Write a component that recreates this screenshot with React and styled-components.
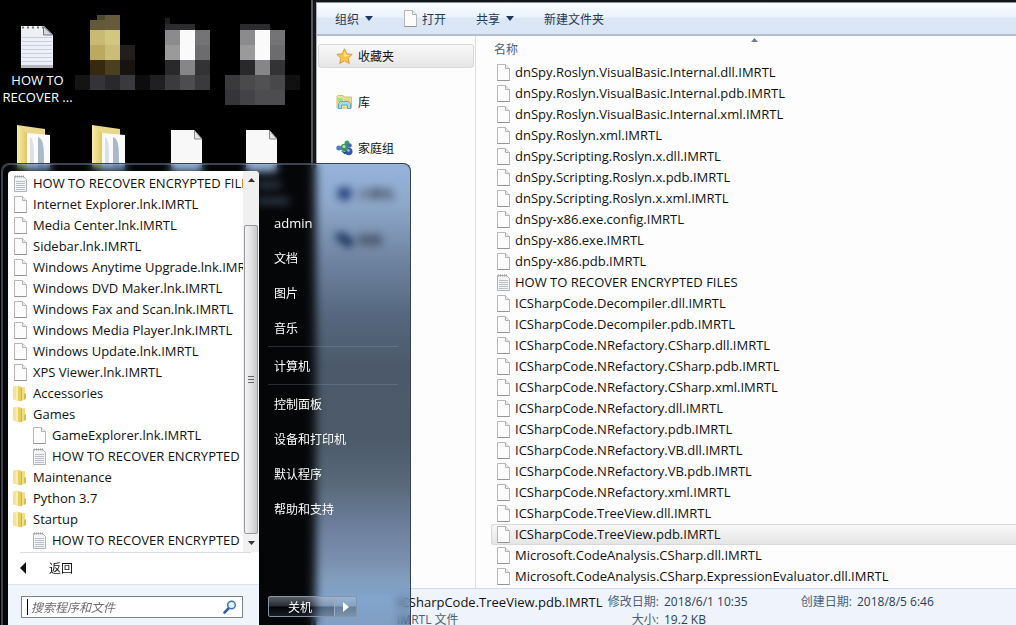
import React from 'react';
import styled, { createGlobalStyle, css } from 'styled-components';

const GlobalStyle = createGlobalStyle`
  * { box-sizing: border-box; }
  html, body { margin: 0; height: 100%; background: #000; }
  #root { height: 100%; }
  body, button, input {
    font-family: "Open Sans", "Noto Sans CJK SC", sans-serif;
    font-size: 12px;
  }
  button { margin: 0; padding: 0; border: 0; background: none; color: inherit; text-align: left; }
  ul { margin: 0; padding: 0; list-style: none; }
`;

/* ---------- desktop ---------- */

const Desktop = styled.div`
  position: relative;
  display: grid;
  grid-template-columns: 311px minmax(0, 1fr);
  height: 100%;
  min-height: 100vh;
  overflow: hidden;
  background: #000;
`;

const IconGrid = styled.div`
  display: grid;
  grid-template-columns: repeat(4, 75px);
  grid-template-rows: 110px 100px;
  align-content: start;
`;

const DesktopIcon = styled.button`
  display: flex;
  flex-direction: column;
  align-items: center;
  color: #fff;
  line-height: 17px;
  text-align: center;
  white-space: pre-line;
  svg { display: block; flex: none; }
`;

const IconLabel = styled.span`
  margin-top: 2px;
  font-size: 13px;
`;

/* ---------- explorer window ---------- */

const Explorer = styled.section`
  display: flex;
  flex-direction: column;
  min-height: 0;
  padding-left: 3px;
  padding-top: 2px;
  background: #14171a;
  border-left: 2px solid #55595d;
`;

const Frame = styled.div`
  flex: 1;
  display: flex;
  flex-direction: column;
  min-height: 0;
  background: #fdfdfe;
  border-top: 1px solid #8d9499;
  border-left: 1px solid #a9adb1;
`;

const Toolbar = styled.div`
  flex: none;
  display: flex;
  align-items: center;
  height: 33px;
  padding-left: 18px;
  gap: 30px;
  background: linear-gradient(#fafdff, #eaf2fc 45%, #dce7f5 50%, #dae6f5);
  border-bottom: 2px solid #b0bfd2;
  color: #1e395b;
`;

const ToolButton = styled.button`
  display: flex;
  align-items: center;
  gap: ${(p) => (p.$tight ? 4 : 6)}px;
`;

const Body = styled.div`
  flex: 1;
  display: flex;
  min-height: 0;
`;

const Nav = styled.nav`
  flex: none;
  width: 159px;
  padding: 8px 1px 0;
  display: flex;
  flex-direction: column;
  gap: 22px;
  border-right: 1px solid #d6e0ee;
`;

const NavItem = styled.button`
  display: flex;
  align-items: center;
  gap: 5px;
  height: 24px;
  padding-left: 17px;
  color: #111;
  border: 1px solid transparent;
  border-radius: 3px;
  ${(p) => p.$active && css`
    background: linear-gradient(#f9f9f9, #e6e6e6);
    border-color: #d9d9d9;
  `}
`;

const ListPane = styled.div`
  position: relative;
  flex: 1;
  min-width: 0;
  padding-left: 15px;
  overflow: hidden;
`;

const SortMark = styled.svg`
  position: absolute;
  left: 51%;
  top: 2px;
`;

const FileTable = styled.table`
  width: 100%;
  border-collapse: collapse;
`;

const HeadCell = styled.th`
  height: 26px;
  padding: 0 0 0 3px;
  text-align: left;
  font-weight: 400;
  color: #4c607a;
`;

const FileCell = styled.td`
  height: 21px;
  padding: 0;
`;

const FileRow = styled.div`
  display: flex;
  align-items: center;
  gap: 4px;
  height: 21px;
  padding-left: 4px;
  border: 1px solid transparent;
  border-right: 0;
  border-radius: 3px 0 0 3px;
  font-size: 13px;
  line-height: 19px;
  color: #111;
  white-space: nowrap;
  ${(p) => p.$selected && css`
    background: linear-gradient(#f8f8f8, #e5e5e5);
    border-color: #d9d9d9;
  `}
`;

const Details = styled.footer`
  flex: none;
  display: grid;
  grid-template-columns: 206px 56px 137px 56px 1fr;
  grid-template-rows: 18px 18px;
  height: 37px;
  padding: 4px 0 0 80px;
  overflow: hidden;
  background: #eff4fc;
  border-top: 1px solid #cfdaea;
  color: #4c607a;
  line-height: 18px;
  white-space: nowrap;
`;

const DetailName = styled.span`
  font-size: 13px;
  color: #111;
`;

const DetailLabel = styled.span`
  text-align: right;
`;

const DetailValue = styled.span`
  padding-left: 5px;
  color: #2c3e58;
`;

/* ---------- start menu ---------- */

const StartMenu = styled.aside`
  position: absolute;
  left: 1px;
  bottom: 0;
  width: 410px;
  height: 462px;
  border-radius: 8px 8px 0 0;
`;

const GlassBlur = styled.div`
  position: absolute;
  inset: 0;
  border-radius: inherit;
  backdrop-filter: blur(4px);
`;

const GlassTint = styled.div`
  position: absolute;
  inset: 0;
  border-radius: inherit;
  mix-blend-mode: multiply;
  background: linear-gradient(#9ab9df, #92acce 9%, #7489a6 20%, #56687e 33%, #4a5968 44%, #4b5a67 60%, #5b6b7a 70%, #6d7f9c 78%, #7f95b3 87%, #8db0d2 94%, #8ca9c8);
`;

const MenuContent = styled.div`
  position: relative;
  display: flex;
  height: 100%;
  padding: 7px 0 0 6px;
  background: rgba(90, 120, 160, 0.05);
  border: 1px solid #39434f;
  border-bottom: 0;
  border-radius: inherit;
  box-shadow: inset 1px 1px 0 rgba(160, 185, 215, 0.35);
`;

const Programs = styled.div`
  flex: none;
  display: flex;
  flex-direction: column;
  width: 251px;
  background: #fff;
  border-radius: 4px 4px 0 0;
  overflow: hidden;
`;

const Scroller = styled.div`
  flex: none;
  display: flex;
  height: 381px;
`;

const ProgramList = styled.ul`
  flex: 1;
  min-width: 0;
  padding-top: 2px;
  overflow: hidden;
`;

const ProgramRow = styled.button`
  display: flex;
  align-items: center;
  gap: 5px;
  width: 100%;
  height: 21px;
  padding-left: ${(p) => (p.$nested ? 24 : 5)}px;
  color: #111;
  font-size: 13px;
  line-height: 19px;
  white-space: nowrap;
  overflow: hidden;
  svg { flex: none; }
`;

const ScrollBar = styled.div`
  flex: none;
  display: flex;
  flex-direction: column;
  width: 16px;
  background: #f0f0f1;
`;

const ScrollArrow = styled.button`
  display: grid;
  place-items: center;
  height: 18px;
`;

const ScrollGap = styled.div`
  height: 36px;
`;

const Thumb = styled.div`
  flex: 1;
  display: grid;
  place-items: center;
  margin: 0 1px;
  background: linear-gradient(90deg, #f4f4f5, #e2e2e4 50%, #c6c7ca);
  border: 1px solid #98999c;
  border-radius: 2px;
`;

const BackRow = styled.button`
  flex: 1;
  display: flex;
  align-items: center;
  gap: 23px;
  margin: 0 8px 0 12px;
  padding-bottom: 1px;
  border-top: 1px solid #d8dde3;
  color: #111;
`;

const SearchArea = styled.div`
  flex: none;
  height: 41px;
  padding: 11px 16px 0 13px;
  background: #f0f4fb;
  border-top: 1px solid #dce3ee;
`;

const SearchBox = styled.label`
  display: flex;
  align-items: center;
  height: 22px;
  padding: 0 5px;
  background: #fff;
  border: 1px solid #7c838c;
`;

const Caret = styled.span`
  width: 1px;
  height: 16px;
  background: #000;
`;

const SearchInput = styled.input`
  flex: 1;
  min-width: 0;
  padding: 0 0 0 3px;
  border: 0;
  outline: 0;
  background: transparent;
  &::placeholder { color: #6d6d6d; opacity: 1; font-style: italic; }
`;

const Links = styled.div`
  flex: 1;
  display: flex;
  flex-direction: column;
  padding: 34px 12px 0 9px;
  color: #fff;
`;

const LinkItem = styled.button`
  height: 35px;
  padding-left: 6px;
  font-size: ${(p) => (p.$latin ? 13 : 12)}px;
`;

const LinkRule = styled.hr`
  width: 100%;
  height: 1px;
  margin: 1px 0;
  border: 0;
  background: rgba(160, 180, 200, 0.22);
`;

const Power = styled.div`
  display: flex;
  width: 89px;
  height: 21px;
  margin: auto 0 8px;
  border: 1px solid #8593a5;
  border-radius: 2px;
  background: linear-gradient(rgba(190, 200, 215, 0.45), rgba(120, 130, 145, 0.3) 48%, rgba(0, 0, 0, 0.35) 52%, rgba(60, 75, 95, 0.35));
`;

const ShutDown = styled.button`
  flex: 1;
  padding-right: 3px;
  text-align: center;
`;

const PowerMore = styled.button`
  display: grid;
  place-items: center;
  width: 22px;
  background: rgba(150, 180, 215, 0.3);
  border-left: 1px solid #9cabbd;
`;

/* ---------- drawings ---------- */

const PageIcon = () => (
  <svg width="15" height="17" viewBox="0 0 15 17">
    <path d="M1.500.5h8l4 4v12h-12z" fill="#fcfcfc" stroke="#b4b6b8" />
    <path d="M9.500.5v4h4" fill="#ececee" stroke="#b0b2b5" />
    <path d="M1.500 16.500h12" stroke="#929497" />
  </svg>
);

const NoteIcon = () => (
  <svg width="15" height="17" viewBox="0 0 15 17">
    <path d="M1.500 1.500h9l3 3v12h-12z" fill="#f1f3f5" stroke="#b0b4b7" />
    <path d="M3 6.500h9M3 8.500h9M3 10.500h9M3 12.500h9M3 14.500h9" stroke="#b8bfc5" />
    <path d="M2 1.500h9" stroke="#999" strokeDasharray="1 1" strokeWidth="2" />
  </svg>
);

const FolderIcon = () => (
  <svg width="15" height="17" viewBox="0 0 15 17">
    <path d="M0 1.500l5-1v15l-5-1z" fill="#f3e596" />
    <path d="M3 1l5 .5v15l-5-1.500z" fill="#e5cf62" />
    <path d="M3 1l2 .2v14.500l-2-.7z" fill="#f7edaf" />
    <path d="M8 2.500l4-.5v12.500l-4 1.500z" fill="#efdf86" />
    <path d="M8 2.500l1-.2v13.500l-1 .2z" fill="#cdb24a" />
    <path d="M11 9l2-1v6l-2 .8z" fill="#d6bd55" />
  </svg>
);

const StarIcon = () => (
  <svg width="17" height="17" viewBox="0 0 17 17">
    <path d="M8.500.8l2.300 5 5.400.6-4 3.700 1.100 5.400-4.800-2.700-4.800 2.700 1.100-5.400-4-3.700 5.400-.6z" fill="#fbc441" stroke="#d99a4a" />
    <path d="M8.500 3l1.500 3.700 3.500.4-5 2z" fill="#fff0a8" />
  </svg>
);

const LibraryIcon = () => (
  <svg width="17" height="16" viewBox="0 0 17 16">
    <path d="M1 2.500l1-1h5l1 1.500h7.500v11h-14.500z" fill="#efe39a" stroke="#d3bd6c" />
    <path d="M2 4h5v4H2z" fill="#a9d98c" />
    <path d="M8 4.500h6v3H8z" fill="#f0cf90" />
    <path d="M2.500 14.500v-5l2-2h8l2 2v5h-3v-3.500h-6v3.500z" fill="#a6dcea" stroke="#5fa9be" />
  </svg>
);

const HomegroupIcon = () => (
  <svg width="17" height="16" viewBox="0 0 17 16">
    <circle cx="2.800" cy="8" r="2.500" fill="#4a7cc0" />
    <circle cx="11" cy="3" r="2.500" fill="#3f9e5c" />
    <circle cx="12.800" cy="11.500" r="3.700" fill="#3558a8" />
    <circle cx="8.500" cy="7.500" r="3.800" fill="#3a9460" />
    <circle cx="13.500" cy="5.500" r="2.300" fill="#4468b4" />
    <circle cx="8" cy="6.500" r="1.500" fill="#b9e6c8" />
    <circle cx="12.500" cy="10.500" r="1.200" fill="#a8c8f0" />
    <path d="M5 11l4 3.500 2-2-3-1z" fill="#27478f" />
  </svg>
);

const ComputerIcon = () => (
  <svg width="17" height="16" viewBox="0 0 17 16">
    <path d="M2 2h13v10H2z" fill="#2a4c90" />
    <path d="M5 13h7v2H5z" fill="#34568f" />
  </svg>
);

const NetworkIcon = () => (
  <svg width="17" height="16" viewBox="0 0 17 16">
    <path d="M0 1h10v8H0z" fill="#1e4a78" />
    <circle cx="12" cy="10" r="5" fill="#12356b" />
  </svg>
);

const Triangle = ({ d, w, h, fill = '#1e395b' }) => (
  <svg width={w} height={h} viewBox={`0 0 ${w} ${h}`}><path d={d} fill={fill} /></svg>
);

const GripLines = () => (
  <svg width="8" height="8" viewBox="0 0 8 8">
    <path d="M1 .5h6M1 3.500h6M1 6.500h6" stroke="#63656a" />
  </svg>
);

const SearchIcon = () => (
  <svg width="14" height="14" viewBox="0 0 14 14">
    <path d="M1.500 12.500l5-5" stroke="#2f5f96" strokeWidth="2.500" strokeLinecap="round" />
    <circle cx="8.500" cy="5" r="3.800" fill="#e4f2fb" stroke="#3f76ad" strokeWidth="1.500" />
  </svg>
);

const BigNote = () => (
  <svg width="75" height="70" viewBox="0 0 75 70">
    <path d="M21 26h23l9 9v33H21z" fill="#eef0f6" />
    <path d="M21 66.500h32" stroke="#b4b8be" strokeWidth="3" />
    <path d="M22 37.500h30M22 41.500h30M22 45.500h30M22 49.500h30M22 53.500h30M22 57.500h30M22 61.500h30" stroke="#c3cee2" />
    <path d="M22 27.500h21" stroke="#777" strokeWidth="2" strokeDasharray="2 3" />
    <path d="M43.500 26.500v8.500h9z" fill="#d3d6db" stroke="#74777c" />
  </svg>
);

const Mosaic = ({ cells, height = 105 }) => (
  <svg width="75" height={height} viewBox={`0 0 75 ${height}`} shapeRendering="crispEdges">
    {cells.map(([x, y, w, h, fill], i) => (
      <rect key={i} x={x} y={y} width={w} height={h} fill={fill} />
    ))}
  </svg>
);

const folderCells = [
  [15, 20, 15, 10, '#62583a'], [22, 15, 8, 5, '#4f472e'], [30, 15, 15, 15, '#655b3b'],
  [15, 30, 15, 15, '#c9ba73'], [30, 30, 15, 15, '#d2c780'],
  [15, 45, 15, 15, '#bba960'], [30, 45, 15, 15, '#cbbd78'], [45, 45, 15, 15, '#211e1b'],
  [15, 60, 15, 15, '#35290f'], [30, 60, 15, 15, '#4b3f1f'], [45, 60, 15, 15, '#161311'],
  [0, 75, 15, 15, '#141415'], [15, 75, 15, 15, '#343438'], [30, 75, 15, 15, '#29292c'],
  [45, 75, 15, 15, '#3a3a3e'], [60, 75, 15, 15, '#0d0d0e'],
];
const pageCells = [
  [15, 18, 5, 6, '#1d1d1d'], [15, 24, 30, 6, '#2c2c2e'],
  [15, 30, 15, 15, '#8b8b8d'], [30, 30, 15, 30, '#fafafa'], [45, 30, 15, 15, '#747476'],
  [15, 45, 15, 15, '#9a9a9b'], [45, 45, 15, 15, '#6c6c6e'],
  [15, 60, 15, 15, '#29292b'], [30, 60, 15, 15, '#868688'], [45, 60, 15, 15, '#333336'],
  [0, 75, 15, 15, '#202023'], [15, 75, 15, 15, '#3b3b3e'], [30, 75, 15, 15, '#4d4d50'], [45, 75, 15, 15, '#3a3a3d'],
];
const pageCellsTall = [
  ...pageCells.slice(1, 10),
  [0, 75, 15, 15, '#3a3a3d'], [15, 75, 15, 15, '#4a4a4d'], [30, 75, 15, 15, '#515154'],
  [45, 75, 15, 15, '#48484b'], [60, 75, 15, 15, '#111112'],
  [0, 90, 15, 15, '#353539'], [15, 90, 15, 15, '#434347'], [30, 90, 30, 15, '#4d4d50'],
];

const BigFolder = () => (
  <svg width="75" height="70" viewBox="0 0 75 70">
    <defs>
      <linearGradient id="folderFront" x1="0" x2="1">
        <stop offset="0" stopColor="#f8eda9" />
        <stop offset="1" stopColor="#dfc766" />
      </linearGradient>
    </defs>
    <path d="M17 15l28 4v40H17z" fill="#e9d78c" />
    <path d="M27 23l23 2v36H27z" fill="#fafafa" />
    <path d="M38 27c6 3 6 8 6 34h-6z" fill="#a9b9cb" />
    <path d="M30 27c4 3 4 8 4 34h-4z" fill="#dbe0e4" />
    <path d="M17 15l10 8v38l-10-5z" fill="url(#folderFront)" />
  </svg>
);

const BigPage = ({ label }) => (
  <svg width="75" height="100" viewBox="0 0 75 100">
    <path d="M21 20h23l8 9v33H21z" fill="#f8f8f8" />
    <path d="M44.500 20.500v8.500h7.500z" fill="#e4e4e4" stroke="#8d8d8d" />
    {label && <path d="M32 75h24M32 91h32" stroke="#6b6f76" strokeWidth="5" />}
  </svg>
);

/* ---------- data ---------- */

const files = [
  'dnSpy.Roslyn.VisualBasic.Internal.dll.IMRTL',
  'dnSpy.Roslyn.VisualBasic.Internal.pdb.IMRTL',
  'dnSpy.Roslyn.VisualBasic.Internal.xml.IMRTL',
  'dnSpy.Roslyn.xml.IMRTL',
  'dnSpy.Scripting.Roslyn.x.dll.IMRTL',
  'dnSpy.Scripting.Roslyn.x.pdb.IMRTL',
  'dnSpy.Scripting.Roslyn.x.xml.IMRTL',
  'dnSpy-x86.exe.config.IMRTL',
  'dnSpy-x86.exe.IMRTL',
  'dnSpy-x86.pdb.IMRTL',
  'HOW TO RECOVER ENCRYPTED FILES',
  'ICSharpCode.Decompiler.dll.IMRTL',
  'ICSharpCode.Decompiler.pdb.IMRTL',
  'ICSharpCode.NRefactory.CSharp.dll.IMRTL',
  'ICSharpCode.NRefactory.CSharp.pdb.IMRTL',
  'ICSharpCode.NRefactory.CSharp.xml.IMRTL',
  'ICSharpCode.NRefactory.dll.IMRTL',
  'ICSharpCode.NRefactory.pdb.IMRTL',
  'ICSharpCode.NRefactory.VB.dll.IMRTL',
  'ICSharpCode.NRefactory.VB.pdb.IMRTL',
  'ICSharpCode.NRefactory.xml.IMRTL',
  'ICSharpCode.TreeView.dll.IMRTL',
  'ICSharpCode.TreeView.pdb.IMRTL',
  'Microsoft.CodeAnalysis.CSharp.dll.IMRTL',
  'Microsoft.CodeAnalysis.CSharp.ExpressionEvaluator.dll.IMRTL',
];
const selectedFile = 'ICSharpCode.TreeView.pdb.IMRTL';

const programs = [
  ['note', 'HOW TO RECOVER ENCRYPTED FILES'],
  ['page', 'Internet Explorer.lnk.IMRTL'],
  ['page', 'Media Center.lnk.IMRTL'],
  ['page', 'Sidebar.lnk.IMRTL'],
  ['page', 'Windows Anytime Upgrade.lnk.IMRTL'],
  ['page', 'Windows DVD Maker.lnk.IMRTL'],
  ['page', 'Windows Fax and Scan.lnk.IMRTL'],
  ['page', 'Windows Media Player.lnk.IMRTL'],
  ['page', 'Windows Update.lnk.IMRTL'],
  ['page', 'XPS Viewer.lnk.IMRTL'],
  ['folder', 'Accessories'],
  ['folder', 'Games'],
  ['page', 'GameExplorer.lnk.IMRTL', true],
  ['note', 'HOW TO RECOVER ENCRYPTED', true],
  ['folder', 'Maintenance'],
  ['folder', 'Python 3.7'],
  ['folder', 'Startup'],
  ['note', 'HOW TO RECOVER ENCRYPTED', true],
];

const icons = { page: PageIcon, note: NoteIcon, folder: FolderIcon };

const links = ['admin', '文档', '图片', '音乐', null, '计算机', null, '控制面板', '设备和打印机', '默认程序', '帮助和支持'];

const navItems = [
  ['收藏夹', StarIcon],
  ['库', LibraryIcon],
  ['家庭组', HomegroupIcon],
  ['计算机', ComputerIcon],
  ['网络', NetworkIcon],
];

export default function App() {
  return (
    <>
      <GlobalStyle />
      <Desktop>
        <IconGrid>
          <DesktopIcon>
            <BigNote />
            <IconLabel>{'HOW TO\nRECOVER ...'}</IconLabel>
          </DesktopIcon>
          <DesktopIcon aria-label="Folder"><Mosaic cells={folderCells} /></DesktopIcon>
          <DesktopIcon aria-label="File"><Mosaic cells={pageCells} /></DesktopIcon>
          <DesktopIcon aria-label="File"><Mosaic cells={pageCellsTall} /></DesktopIcon>
          <DesktopIcon aria-label="Folder"><BigFolder /></DesktopIcon>
          <DesktopIcon aria-label="Folder"><BigFolder /></DesktopIcon>
          <DesktopIcon aria-label="File"><BigPage /></DesktopIcon>
          <DesktopIcon aria-label="File"><BigPage label /></DesktopIcon>
        </IconGrid>

        <Explorer>
          <Frame>
            <Toolbar>
              <ToolButton>组织<Triangle w={8} h={5} d="M0 0h8l-4 5z" /></ToolButton>
              <ToolButton $tight><PageIcon />打开</ToolButton>
              <ToolButton>共享<Triangle w={8} h={5} d="M0 0h8l-4 5z" /></ToolButton>
              <ToolButton>新建文件夹</ToolButton>
            </Toolbar>
            <Body>
              <Nav>
                {navItems.map(([name, Icon], i) => (
                  <NavItem key={name} $active={i === 0}><Icon />{name}</NavItem>
                ))}
              </Nav>
              <ListPane>
                <SortMark width="7" height="4" viewBox="0 0 7 4"><path d="M0 4l3.500-4L7 4z" fill="#6b7c93" /></SortMark>
                <FileTable>
                  <thead><tr><HeadCell>名称</HeadCell></tr></thead>
                  <tbody>
                    {files.map((name) => (
                      <tr key={name}>
                        <FileCell>
                          <FileRow $selected={name === selectedFile}>
                            {name.startsWith('HOW') ? <NoteIcon /> : <PageIcon />}
                            {name}
                          </FileRow>
                        </FileCell>
                      </tr>
                    ))}
                  </tbody>
                </FileTable>
              </ListPane>
            </Body>
            <Details>
              <DetailName>{selectedFile}</DetailName>
              <DetailLabel>修改日期:</DetailLabel>
              <DetailValue>2018/6/1 10:35</DetailValue>
              <DetailLabel>创建日期:</DetailLabel>
              <DetailValue>2018/8/5 6:46</DetailValue>
              <span>IMRTL 文件</span>
              <DetailLabel>大小:</DetailLabel>
              <DetailValue>19.2 KB</DetailValue>
            </Details>
          </Frame>
        </Explorer>

        <StartMenu>
          <GlassBlur />
          <GlassTint />
          <MenuContent>
            <Programs>
              <Scroller>
                <ProgramList>
                  {programs.map(([kind, name, nested], i) => {
                    const Icon = icons[kind];
                    return (
                      <li key={i}><ProgramRow $nested={nested}><Icon />{name}</ProgramRow></li>
                    );
                  })}
                </ProgramList>
                <ScrollBar>
                  <ScrollArrow aria-label="Scroll up"><Triangle w={7} h={4} d="M0 4l3.500-4L7 4z" fill="#333" /></ScrollArrow>
                  <ScrollGap />
                  <Thumb><GripLines /></Thumb>
                  <ScrollArrow aria-label="Scroll down"><Triangle w={7} h={4} d="M0 0h7L3.500 4z" fill="#333" /></ScrollArrow>
                </ScrollBar>
              </Scroller>
              <BackRow><Triangle w={6} h={12} d="M6 0v12L0 6z" fill="#111" />返回</BackRow>
              <SearchArea>
                <SearchBox>
                  <Caret />
                  <SearchInput type="text" placeholder="搜索程序和文件" aria-label="搜索程序和文件" />
                  <SearchIcon />
                </SearchBox>
              </SearchArea>
            </Programs>
            <Links>
              {links.map((name, i) => (name
                ? <LinkItem key={i} $latin={name === 'admin'}>{name}</LinkItem>
                : <LinkRule key={i} />))}
              <Power>
                <ShutDown>关机</ShutDown>
                <PowerMore aria-label="More"><Triangle w={6} h={10} d="M0 0l6 5-6 5z" fill="#fff" /></PowerMore>
              </Power>
            </Links>
          </MenuContent>
        </StartMenu>
      </Desktop>
    </>
  );
}
